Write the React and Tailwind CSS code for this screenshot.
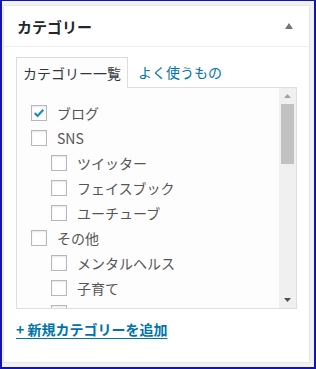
const rows = [
  { label: "ブログ", child: false, checked: true },
  { label: "SNS", child: false },
  { label: "ツイッター", child: true },
  { label: "フェイスブック", child: true },
  { label: "ユーチューブ", child: true },
  { label: "その他", child: false },
  { label: "メンタルヘルス", child: true },
  { label: "子育て", child: true },
  { label: "", child: true },
];

const Checkbox = ({ checked }) => (
  <span className="flex h-[16px] w-[16px] shrink-0 items-center justify-center border border-[#b4b9be] bg-white shadow-[inset_0_1px_2px_rgba(0,0,0,0.1)]">
    {checked && (
      <svg viewBox="0 0 16 16" className="h-[16px] w-[16px]">
        <path d="M3.2 8.2 L6.4 11.4 L12.9 4.4" fill="none" stroke="#1e8cbe" strokeWidth="2.6" />
      </svg>
    )}
  </span>
);

export default function App() {
  return (
    <div
      className="h-[369px] w-[316px] border-x-2 border-t border-b-2 border-[#1414b4] bg-[#f1f1f1] pl-px pr-[4px] pt-[4px] pb-[4px] text-[#444]"
      style={{ fontFamily: '"Noto Sans CJK JP", "Liberation Sans", sans-serif' }}
    >
      <div className="flex h-full flex-col border border-[#e5e5e5] bg-white">
        {/* header */}
        <div className="flex h-[41px] shrink-0 items-center justify-between border-b border-[#eee] pl-[13px] pr-[16px]">
          <h2 className="text-[15px] leading-none font-bold text-[#23282d]">カテゴリー</h2>
          <svg viewBox="0 0 8 6" className="h-[6px] w-[8px]">
            <path d="M4 0 L8 6 L0 6 Z" fill="#72777c" />
          </svg>
        </div>

        <div className="flex flex-col pl-[12px] pr-[12px] pt-[9px]">
          {/* tabs */}
          <div className="flex items-end">
            <div className="relative z-10 -mb-px flex h-[31px] items-center border border-b-0 border-[#ddd] bg-[#fdfdfd] px-[6px] text-[14px] leading-none text-[#32373c]">
              カテゴリー一覧
            </div>
            <div className="flex h-[31px] items-center px-[10px] text-[14px] leading-none text-[#0073aa]">
              よく使うもの
            </div>
          </div>

          {/* list box */}
          <div className="flex h-[222px] border border-[#ddd] bg-[#fdfdfd]">
            <div className="flex flex-1 flex-col overflow-hidden pt-[12px] pl-[14px]">
              {rows.map((r, i) => (
                <div
                  key={i}
                  className={`flex h-[25px] shrink-0 items-center gap-[10px] ${r.child ? "pl-[20px]" : ""}`}
                >
                  <Checkbox checked={r.checked} />
                  {r.label && <span className="text-[14px] leading-none text-[#555]">{r.label}</span>}
                </div>
              ))}
            </div>
            <div className="flex w-[17px] shrink-0 flex-col items-center bg-[#f0f0f0]">
              <div className="flex h-[16px] items-center justify-center">
                <svg viewBox="0 0 7 4" className="h-[4px] w-[7px]">
                  <path d="M3.5 0 L7 4 L0 4 Z" fill="#a3a3a3" />
                </svg>
              </div>
              <div className="h-[60px] w-[13px] bg-[#c1c1c1]" />
              <div className="flex-1" />
              <div className="flex h-[16px] items-center justify-center">
                <svg viewBox="0 0 7 4" className="h-[4px] w-[7px]">
                  <path d="M0 0 L7 0 L3.5 4 Z" fill="#505050" />
                </svg>
              </div>
            </div>
          </div>

          <a
            href="#"
            className="mt-[10px] self-start text-[14px] leading-[20px] font-semibold text-[#0073aa] underline underline-offset-[3px]"
          >
            + 新規カテゴリーを追加
          </a>
        </div>
      </div>
    </div>
  );
}
